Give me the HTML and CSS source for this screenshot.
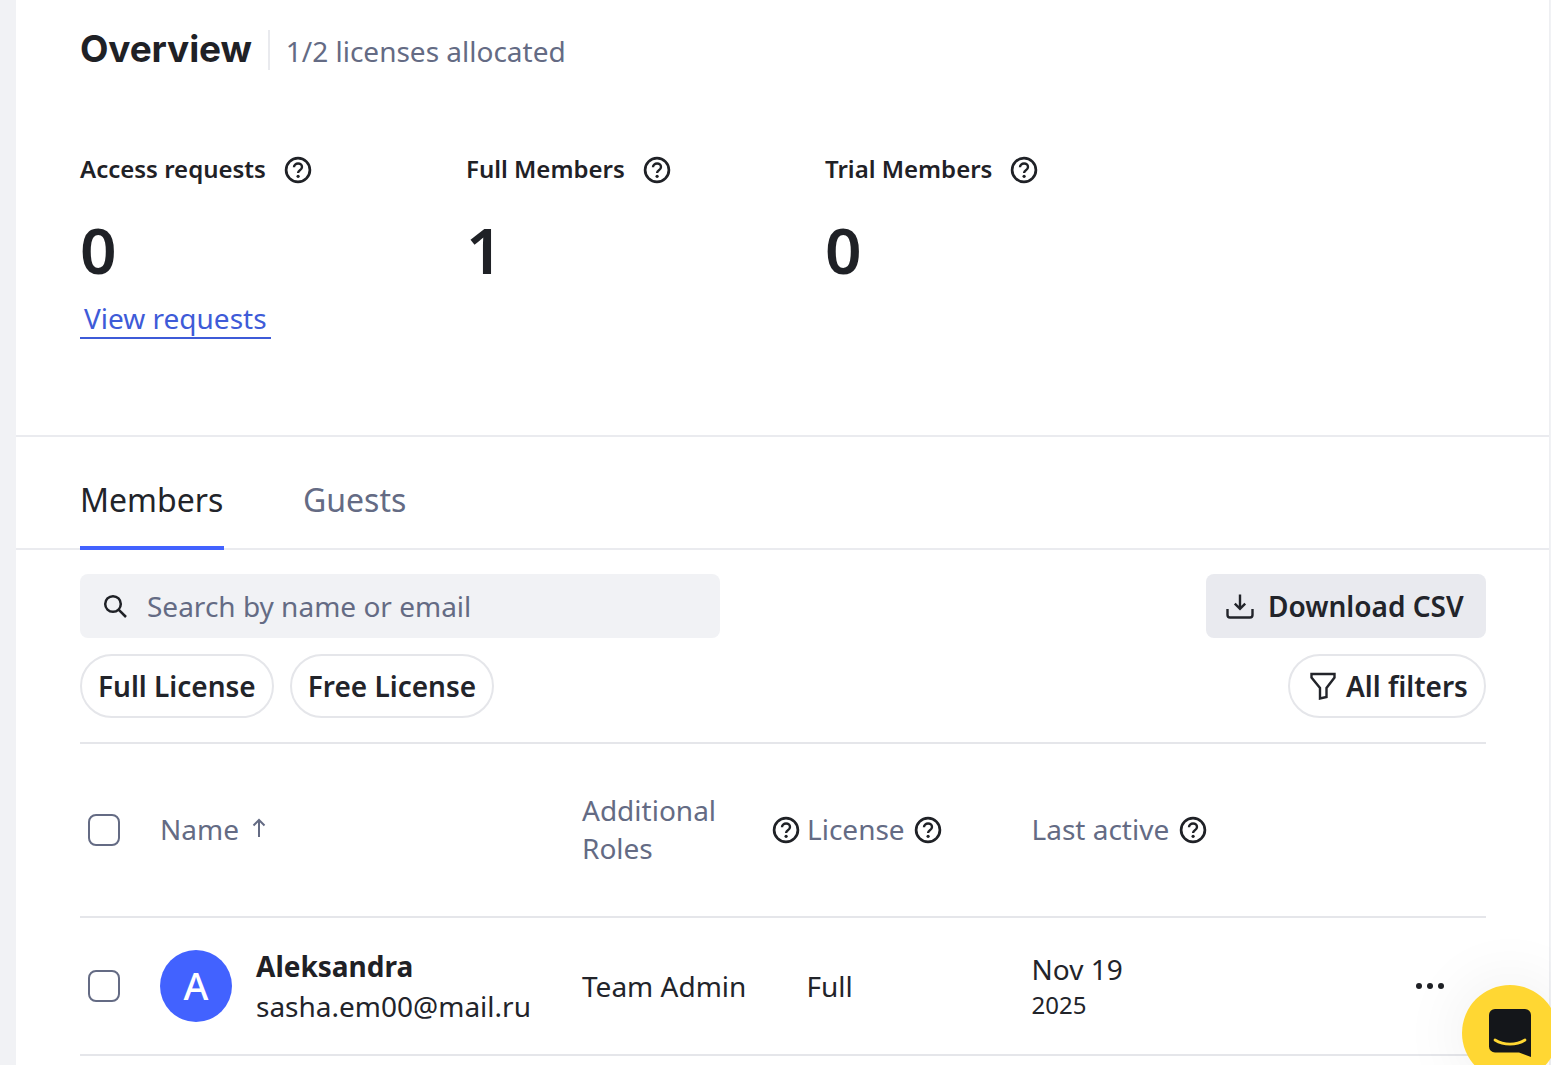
FILE: index.html
```html
<!DOCTYPE html>
<html lang="en">
<head>
<meta charset="utf-8">
<title>Overview</title>
<link rel="stylesheet" href="styles.css">
</head>
<body>
<svg class="sprite" width="0" height="0" aria-hidden="true">
  <symbol id="help" viewBox="0 0 28 28">
    <circle cx="14" cy="14" r="11.9" fill="none" stroke="currentColor" stroke-width="2.7"/>
    <path d="M10 11.300c0-2.300 1.800-3.800 4.100-3.800 2.200 0 3.900 1.500 3.900 3.500 0 1.500-.9 2.400-2.100 3.200-1.100.7-1.800 1.300-1.800 2.700" fill="none" stroke="currentColor" stroke-width="2.400"/>
    <circle cx="14.100" cy="20.300" r="1.600" fill="currentColor"/>
  </symbol>
</svg>
<main class="page">
  <section class="overview">
    <header class="title-row">
      <h1 class="title">Overview</h1>
      <span class="allocated">1/2 licenses allocated</span>
    </header>
    <div class="stats">
      <div class="stat">
        <div class="stat-label">Access requests <svg class="help stat-help"><use href="#help"/></svg></div>
        <div class="stat-value">0</div>
        <a class="stat-link" href="#">View requests</a>
      </div>
      <div class="stat">
        <div class="stat-label">Full Members <svg class="help stat-help"><use href="#help"/></svg></div>
        <div class="stat-value">1</div>
      </div>
      <div class="stat">
        <div class="stat-label">Trial Members <svg class="help stat-help"><use href="#help"/></svg></div>
        <div class="stat-value">0</div>
      </div>
    </div>
  </section>

  <nav class="tabs">
    <a class="tab tab-active" href="#">Members</a>
    <a class="tab" href="#">Guests</a>
  </nav>

  <section class="members">
    <div class="toolbar">
      <label class="search">
        <svg class="search-icon" viewBox="0 0 24 24"><circle cx="10" cy="10" r="7.800" fill="none" stroke="currentColor" stroke-width="2.500"/><path d="M15.600 15.600 23 23" fill="none" stroke="currentColor" stroke-width="2.500"/></svg>
        <span class="search-text">Search by name or email</span>
      </label>
      <button class="download" type="button">
        <svg class="download-icon" viewBox="0 0 28 28"><path d="M14 2.500v14M8.800 11.600l5.200 5.200 5.200-5.200M1.500 17v6a2.500 2.500 0 0 0 2.500 2.500h20a2.500 2.500 0 0 0 2.500-2.500v-6" fill="none" stroke="currentColor" stroke-width="2.400"/></svg>
        Download CSV
      </button>
    </div>
    <div class="filters">
      <button class="pill" type="button">Full License</button>
      <button class="pill" type="button">Free License</button>
      <button class="pill pill-end" type="button">
        <svg class="filter-icon" viewBox="0 0 26 28"><path d="M1.500 2h23v3.500l-8 10.500v9l-6.500 1.500V16l-8.500-10.500z" fill="none" stroke="currentColor" stroke-width="2.400" stroke-linejoin="miter"/></svg>
        All filters
      </button>
    </div>

    <table class="table">
      <colgroup>
        <col class="col-check"><col class="col-name"><col class="col-roles"><col class="col-license"><col class="col-active"><col>
      </colgroup>
      <thead>
        <tr>
          <th class="cell-check"><span class="checkbox"></span></th>
          <th><span class="th-inline">Name <svg class="arrow" viewBox="0 0 16 20"><path d="M8 19V2M2.500 7.500 8 2l5.500 5.500" fill="none" stroke="currentColor" stroke-width="2"/></svg></span></th>
          <th class="th-roles">Additional Roles</th>
          <th><span class="th-inline th-license"><svg class="help"><use href="#help"/></svg><span class="license-text">License</span><svg class="help"><use href="#help"/></svg></span></th>
          <th><span class="th-inline th-active">Last active<svg class="help"><use href="#help"/></svg></span></th>
          <th></th>
        </tr>
      </thead>
      <tbody>
        <tr>
          <td class="cell-check"><span class="checkbox"></span></td>
          <td>
            <div class="person">
              <span class="avatar">A</span>
              <div class="person-text">
                <div class="person-name">Aleksandra</div>
                <div class="person-mail">sasha.em00@mail.ru</div>
              </div>
            </div>
          </td>
          <td>Team Admin</td>
          <td class="cell-license">Full</td>
          <td><div class="date">Nov 19</div><div class="year">2025</div></td>
          <td class="cell-more"><span class="more"><i></i><i></i><i></i></span></td>
        </tr>
      </tbody>
    </table>
  </section>
</main>
<button class="chat" type="button" aria-label="Chat">
  <svg class="chat-icon" viewBox="0 0 42 48"><path d="M6 0h30a6 6 0 0 1 6 6v42l-12-4.500H6a6 6 0 0 1-6-6V6a6 6 0 0 1 6-6z" fill="#14161a"/><path d="M6 31c9 5.500 21 5.500 30 0" fill="none" stroke="#ffd733" stroke-width="2.800" stroke-linecap="round"/></svg>
</button>
</body>
</html>
```

FILE: styles.css
```css
* { box-sizing: border-box; }
html, body { margin: 0; height: 1065px; overflow: hidden; }
body {
  background: #f1f2f5;
  padding-left: 16px;
  font-family: "Noto Sans", "Open Sans", sans-serif;
  color: #22242a;
}
.sprite { position: absolute; }
.page { background: #fff; height: 1065px; width: 1534px; border-right: 1px solid #eeeff2; }
a { text-decoration: none; }
button { font: inherit; color: inherit; cursor: pointer; }

.overview { height: 437px; padding: 30px 64px 0; border-bottom: 2px solid #eaebef; }
.title-row { display: flex; align-items: center; height: 40px; }
.title {
  margin: 0;
  padding-right: 16px;
  border-right: 2px solid #e9eaee;
  height: 40px;
  font: 700 37px/38px Inter, sans-serif;
  letter-spacing: -0.15px;
  color: #1f2126;
}
.allocated { margin-left: 16px; padding-top: 2px; font-size: 28px; line-height: 40px; color: #646b84; }

.stats { display: grid; grid-template-columns: 386px 359px 300px; margin-top: 80px; }
.stat-label { display: flex; align-items: center; gap: 18px; height: 36px; font-size: 24px; font-weight: 600; color: #1f2126; white-space: nowrap; }
.help { width: 28px; height: 28px; color: #1f2126; flex: none; }
.stat-help { margin-top: 4px; }
.stat-value { margin-top: 32px; font-size: 64px; line-height: 64px; font-weight: 600; color: #1f2126; }
.stat-link {
  display: inline-block;
  margin-top: 17px;
  padding: 0 4px;
  height: 40px;
  font-size: 28px;
  line-height: 38px;
  color: #3e5bd8;
  border-bottom: 2px solid #3e5bd8;
}

.tabs { display: flex; gap: 79px; height: 113px; padding: 0 64px; border-bottom: 2px solid #eaebef; }
.tab { display: block; height: 113px; font-size: 32px; line-height: 125px; color: #646b84; }
.tab-active { min-width: 144px; color: #22242a; border-bottom: 4px solid #4262ff; }

.members { padding: 24px 63px 0 64px; }
.toolbar { display: flex; justify-content: space-between; height: 64px; }
.search {
  display: flex; align-items: center;
  width: 640px; height: 64px;
  padding-left: 23px;
  background: #f1f2f5;
  border-radius: 8px;
}
.search-icon { width: 24px; height: 24px; color: #1f2126; }
.search-text { margin-left: 20px; font-size: 28px; color: #646b84; }
.download {
  display: flex; align-items: center; gap: 14px;
  width: 280px; height: 64px;
  padding: 0 0 0 20px;
  border: 0; border-radius: 8px;
  background: #e9eaef;
  font-size: 28px; font-weight: 600; color: #22242a;
}
.download-icon { width: 28px; height: 28px; }
.filters { display: flex; gap: 16px; margin-top: 16px; }
.pill {
  display: flex; align-items: center; gap: 10px;
  height: 64px;
  padding: 0 16px;
  background: #fff;
  border: 2px solid #e5e6ea;
  border-radius: 32px;
  font-size: 28px; font-weight: 600; color: #22242a;
}
.pill-end { margin-left: auto; padding-left: 20px; width: 198px; }
.filter-icon { width: 26px; height: 28px; }

.table { width: 1406px; margin-top: 24px; border-collapse: collapse; table-layout: fixed; border-top: 2px solid #e5e6ea; }
.col-check { width: 80px; }
.col-name { width: 422px; }
.col-roles { width: 191px; }
.col-license { width: 259px; }
.col-active { width: 300px; }
th { height: 174px; padding: 0 0 2px; text-align: left; font-size: 28px; font-weight: 400; line-height: 38px; color: #646b84; border-bottom: 2px solid #e5e6ea; }
td { height: 138px; padding: 0; font-size: 28px; color: #22242a; border-bottom: 2px solid #e5e6ea; }
.th-roles { padding-right: 20px; }
.th-inline { display: flex; align-items: center; }
.th-inline .help { margin-top: 2px; }
.th-license { gap: 7px; margin-left: -1px; }
.license-text { margin-right: 2px; }
.th-active { gap: 10px; margin-left: -0.5px; }
.arrow { width: 16px; height: 20px; margin-left: 12px; margin-bottom: 2px; }
.cell-check { padding: 0 0 0 8px; }
.checkbox { display: block; width: 32px; height: 32px; border: 2px solid #646b84; border-radius: 8px; background: #fff; }
.person { display: flex; align-items: center; gap: 24px; }
.avatar {
  display: flex; align-items: center; justify-content: center;
  width: 72px; height: 72px; flex: none;
  padding-bottom: 2px;
  border-radius: 50%;
  background: #4262ff; color: #fff;
  font-size: 38px; font-weight: 500;
}
.person-name { font-size: 28px; line-height: 40px; font-weight: 700; color: #1f2126; }
.person-mail { font-size: 28px; line-height: 40px; color: #22242a; white-space: nowrap; }
.cell-license { padding-left: 33.500px; }
.date { font-size: 28px; line-height: 38px; margin-left: -0.500px; }
.year { font-size: 24px; line-height: 34px; margin-left: -0.500px; }
.cell-more { padding-left: 84px; }
.more { display: flex; gap: 5px; }
.more i { width: 6px; height: 6px; border-radius: 50%; background: #1f2126; }

.chat {
  position: fixed;
  left: 1462px; top: 985px;
  width: 96px; height: 96px;
  padding: 0;
  border: 0; border-radius: 50%;
  background: #ffd733;
  box-shadow: 0 0 60px 10px rgba(20, 22, 26, 0.05);
}
.chat-icon { position: absolute; left: 27px; top: 24px; width: 42px; height: 48px; }
```
